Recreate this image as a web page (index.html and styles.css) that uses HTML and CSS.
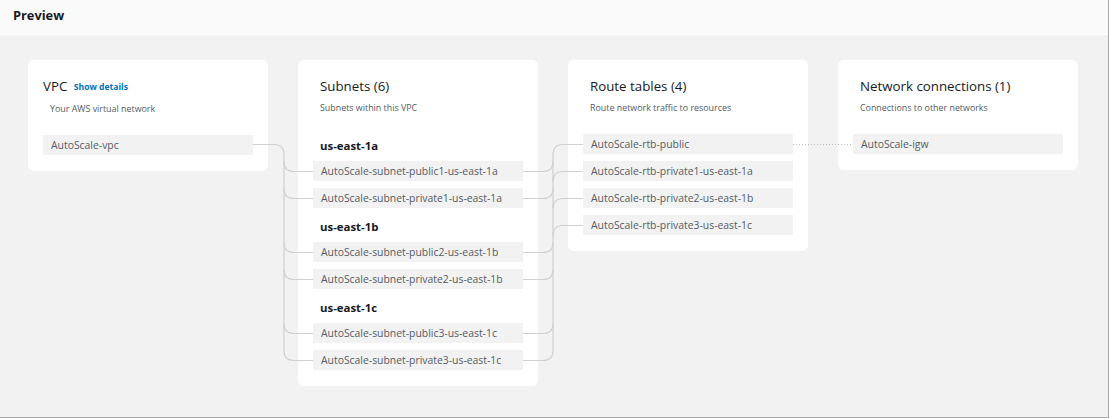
FILE: index.html
```html
<!DOCTYPE html>
<html>
<head>
<meta charset="utf-8">
<link rel="stylesheet" href="styles.css">
</head>
<body>
<div class="frame">
  <header class="header"><h2 class="header-title">Preview</h2></header>
  <div class="canvas">
    <section class="card">
      <div class="card-title card-title--flush">VPC <a class="link" href="#">Show details</a></div>
      <div class="card-desc">Your AWS virtual network</div>
      <div class="list">
        <div class="item">AutoScale-vpc</div>
      </div>
    </section>
    <section class="card">
      <div class="card-title">Subnets (6)</div>
      <div class="card-desc">Subnets within this VPC</div>
      <div class="list">
        <div class="group">us-east-1a</div>
        <div class="item">AutoScale-subnet-public1-us-east-1a</div>
        <div class="item">AutoScale-subnet-private1-us-east-1a</div>
        <div class="group">us-east-1b</div>
        <div class="item">AutoScale-subnet-public2-us-east-1b</div>
        <div class="item">AutoScale-subnet-private2-us-east-1b</div>
        <div class="group">us-east-1c</div>
        <div class="item">AutoScale-subnet-public3-us-east-1c</div>
        <div class="item">AutoScale-subnet-private3-us-east-1c</div>
      </div>
    </section>
    <section class="card">
      <div class="card-title">Route tables (4)</div>
      <div class="card-desc">Route network traffic to resources</div>
      <div class="list">
        <div class="item">AutoScale-rtb-public</div>
        <div class="item">AutoScale-rtb-private1-us-east-1a</div>
        <div class="item">AutoScale-rtb-private2-us-east-1b</div>
        <div class="item">AutoScale-rtb-private3-us-east-1c</div>
      </div>
    </section>
    <section class="card">
      <div class="card-title">Network connections (1)</div>
      <div class="card-desc">Connections to other networks</div>
      <div class="list">
        <div class="item">AutoScale-igw</div>
      </div>
    </section>
  </div>
  <svg class="wires" width="1109" height="418" viewBox="0 0 1109 418">
    <g fill="none" stroke="#d0d0d0" stroke-width="1.2">
      <path d="M253 144.5 H274 Q284 144.5 284 154.5 V350.5 Q284 360.5 294 360.5 H313"/>
      <path d="M284 161.5 Q284 171.5 294 171.5 H313"/>
      <path d="M284 188.5 Q284 198.5 294 198.5 H313"/>
      <path d="M284 242.5 Q284 252.5 294 252.5 H313"/>
      <path d="M284 269.5 Q284 279.5 294 279.5 H313"/>
      <path d="M284 323.5 Q284 333.5 294 333.5 H313"/>
      <path d="M583 144.5 H563 Q553 144.5 553 154.5 V350.5 Q553 360.5 543 360.5 H523"/>
      <path d="M523 171.5 H543 Q553 171.5 553 161.5"/>
      <path d="M523 198.5 H543 Q553 198.5 553 188.5"/>
      <path d="M523 252.5 H543 Q553 252.5 553 242.5"/>
      <path d="M523 279.5 H543 Q553 279.5 553 269.5"/>
      <path d="M523 333.5 H543 Q553 333.5 553 323.5"/>
      <path d="M553 181.5 Q553 171.5 563 171.5 H583"/>
      <path d="M553 208.5 Q553 198.5 563 198.5 H583"/>
      <path d="M553 235.5 Q553 225.5 563 225.5 H583"/>
    </g>
    <path d="M793 144.5 H853" fill="none" stroke="#bdbdbd" stroke-width="1" stroke-dasharray="1 2"/>
  </svg>
</div>
</body>
</html>
```
FILE: styles.css
```css
* { box-sizing: border-box; }
html, body { margin: 0; padding: 0; background: #ffffff; }
body { font-family: "Open Sans", "Noto Sans", Arial, sans-serif; color: #16191f; }

.frame {
  position: relative;
  width: 1109px;
  height: 418px;
  background: #f2f2f2;
  border-right: 1px solid #a9a9a9;
  border-bottom: 1px solid #a9a9a9;
  overflow: hidden;
}

.header {
  height: 35px;
  background: #fafafa;
  border-bottom: 1px solid #fdfdfd;
  padding: 0 13px;
  display: flex;
  align-items: center;
}
.header-title {
  margin: 0;
  font-size: 12.8px;
  font-weight: 700;
  color: #16191f;
  line-height: 20px;
  margin-top: -5px;
}

.canvas {
  display: flex;
  align-items: flex-start;
  gap: 30px;
  padding: 25px 28px;
}

.card {
  width: 240px;
  background: #ffffff;
  border-radius: 6px;
  padding: 16px 15px 16px;
}

.card-title {
  font-size: 13.3px;
  line-height: 20px;
  padding-left: 7px;
  color: #16191f;
  white-space: nowrap;
}
.card-title--flush { padding-left: 0; }

.link {
  font-size: 8.6px;
  font-weight: 700;
  color: #0073bb;
  text-decoration: none;
  margin-left: 3px;
  vertical-align: 1px;
}

.card-desc {
  margin-top: 5px;
  font-size: 8.9px;
  line-height: 14px;
  padding-left: 7px;
  color: #545b64;
}

.list {
  margin-top: 19px;
  display: flex;
  flex-direction: column;
  gap: 7px;
}

.group {
  margin-top: 4px;
  font-size: 11.4px;
  font-weight: 700;
  line-height: 16px;
  padding-left: 7px;
  color: #16191f;
}

.item {
  height: 20px;
  width: 210px;
  background: #f2f2f2;
  padding-left: 8px;
  font-size: 10.4px;
  line-height: 20px;
  color: #545b64;
  white-space: nowrap;
}

.wires {
  position: absolute;
  left: 0;
  top: 0;
  pointer-events: none;
}
```
